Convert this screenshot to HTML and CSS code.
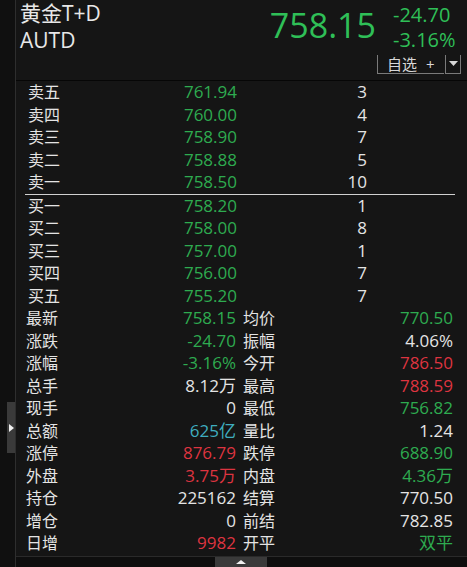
FILE: index.html
```html
<!DOCTYPE html>
<html lang="zh-CN">
<head>
<meta charset="utf-8">
<title>黄金T+D</title>
<link rel="stylesheet" href="styles.css">
</head>
<body>
<div class="app">
  <aside class="side">
    <div class="vthumb"><span class="rarrow"></span></div>
  </aside>
  <main class="main">
    <header class="head">
      <div class="title">
        <div>黄金T+D</div>
        <div>AUTD</div>
      </div>
      <div class="quote">
        <div class="qrow">
          <div class="last">758.15</div>
          <div class="chg">
            <div>-24.70</div>
            <div>-3.16%</div>
          </div>
        </div>
        <div class="tools">
          <span class="fav">自选<span class="plus">+</span></span>
          <span class="drop"><svg width="9" height="5" viewBox="0 0 9 5"><path d="M0 0H9L4.5 5Z" fill="#d8d8d8"/></svg></span>
        </div>
      </div>
    </header>

    <section class="book sell">
      <div class="row"><div class="c1"><span class="lbl">卖五</span><span class="num g">761.94</span></div><span class="num vol">3</span></div>
      <div class="row"><div class="c1"><span class="lbl">卖四</span><span class="num g">760.00</span></div><span class="num vol">4</span></div>
      <div class="row"><div class="c1"><span class="lbl">卖三</span><span class="num g">758.90</span></div><span class="num vol">7</span></div>
      <div class="row"><div class="c1"><span class="lbl">卖二</span><span class="num g">758.88</span></div><span class="num vol">5</span></div>
      <div class="row"><div class="c1"><span class="lbl">卖一</span><span class="num g">758.50</span></div><span class="num vol">10</span></div>
    </section>
    <section class="book buy">
      <div class="row"><div class="c1"><span class="lbl">买一</span><span class="num g">758.20</span></div><span class="num vol">1</span></div>
      <div class="row"><div class="c1"><span class="lbl">买二</span><span class="num g">758.00</span></div><span class="num vol">8</span></div>
      <div class="row"><div class="c1"><span class="lbl">买三</span><span class="num g">757.00</span></div><span class="num vol">1</span></div>
      <div class="row"><div class="c1"><span class="lbl">买四</span><span class="num g">756.00</span></div><span class="num vol">7</span></div>
      <div class="row"><div class="c1"><span class="lbl">买五</span><span class="num g">755.20</span></div><span class="num vol">7</span></div>
    </section>

    <section class="stats">
      <div class="cell"><span class="lbl">最新</span><span class="num g">758.15</span></div>
      <div class="cell"><span class="lbl">均价</span><span class="num g">770.50</span></div>
      <div class="cell"><span class="lbl">涨跌</span><span class="num g">-24.70</span></div>
      <div class="cell"><span class="lbl">振幅</span><span class="num w">4.06%</span></div>
      <div class="cell"><span class="lbl">涨幅</span><span class="num g">-3.16%</span></div>
      <div class="cell"><span class="lbl">今开</span><span class="num r">786.50</span></div>
      <div class="cell"><span class="lbl">总手</span><span class="num w">8.12万</span></div>
      <div class="cell"><span class="lbl">最高</span><span class="num r">788.59</span></div>
      <div class="cell"><span class="lbl">现手</span><span class="num w">0</span></div>
      <div class="cell"><span class="lbl">最低</span><span class="num g">756.82</span></div>
      <div class="cell"><span class="lbl">总额</span><span class="num c">625亿</span></div>
      <div class="cell"><span class="lbl">量比</span><span class="num w">1.24</span></div>
      <div class="cell"><span class="lbl">涨停</span><span class="num r">876.79</span></div>
      <div class="cell"><span class="lbl">跌停</span><span class="num g">688.90</span></div>
      <div class="cell"><span class="lbl">外盘</span><span class="num r">3.75万</span></div>
      <div class="cell"><span class="lbl">内盘</span><span class="num g">4.36万</span></div>
      <div class="cell"><span class="lbl">持仓</span><span class="num w">225162</span></div>
      <div class="cell"><span class="lbl">结算</span><span class="num w">770.50</span></div>
      <div class="cell"><span class="lbl">增仓</span><span class="num w">0</span></div>
      <div class="cell"><span class="lbl">前结</span><span class="num w">782.85</span></div>
      <div class="cell"><span class="lbl">日增</span><span class="num r">9982</span></div>
      <div class="cell"><span class="lbl">开平</span><span class="num g">双平</span></div>
    </section>

    <div class="hscroll"><div class="hthumb"><span class="uarrow"></span></div></div>
  </main>
</div>
</body>
</html>
```

FILE: styles.css
```css
* { box-sizing: border-box; }
html, body { margin: 0; padding: 0; }
body {
  width: 467px;
  height: 567px;
  overflow: hidden;
  background: #151515;
  color: #e4e4e4;
  font-family: "Open Sans", "Noto Sans CJK SC", sans-serif;
}
.app { display: flex; height: 567px; }

.side {
  width: 16px;
  flex: none;
  background: #101010;
  border-right: 1px solid #2e2e2e;
  padding-top: 402px;
}
.vthumb {
  position: relative;
  margin-left: 7px;
  width: 8px;
  height: 51px;
  background: #3a3a3a;
}
.rarrow {
  position: absolute;
  left: 2px;
  top: 22px;
  width: 0; height: 0;
  border-left: 5px solid #f0f0f0;
  border-top: 4px solid transparent;
  border-bottom: 4px solid transparent;
}

.main { flex: 1; display: flex; flex-direction: column; min-width: 0; }

.head {
  height: 81px;
  flex: none;
  border-bottom: 1px solid #060606;
  display: flex;
  justify-content: space-between;
}
.title {
  padding: 0 0 0 4px;
  font-size: 21px;
  line-height: 27px;
  color: #e8e8e8;
}
.quote {
  display: flex;
  flex-direction: column;
  align-items: flex-end;
  padding-right: 6px;
}
.qrow { display: flex; align-items: flex-start; padding-right: 5px; }
.last {
  margin-top: 3px;
  font-size: 34px;
  line-height: 44px;
  color: #2fbf57;
}
.chg {
  margin-left: 17px;
  margin-top: 2px;
  width: 63px;
  font-size: 20px;
  line-height: 25px;
  color: #2fbf57;
}
.tools { display: flex; margin-top: 3px; height: 19px; }
.fav {
  width: 67px;
  padding-left: 9px;
  border-left: 1px solid #7a7a7a;
  border-bottom: 1px solid #7a7a7a;
  font-size: 15px;
  line-height: 18px;
  color: #d8d8d8;
}
.plus { margin-left: 9px; }
.drop {
  width: 16px;
  margin-left: 1px;
  border-left: 1px solid #7a7a7a;
  border-right: 1px solid #7a7a7a;
  border-bottom: 1px solid #7a7a7a;
  display: flex;
  justify-content: center;
  padding-top: 6px;
}
.drop svg { display: block; }

.book { margin: 0 12px 0 9px; padding-left: 3px; }
.book.sell { border-bottom: 1px solid #d0d0d0; }
.row {
  display: grid;
  grid-template-columns: 209px 130px;
  height: 22.5px;
  line-height: 22.5px;
}
.c1 { display: flex; justify-content: space-between; }
.vol { text-align: right; }

.lbl { font-size: 16px; color: #e4e4e4; }
.num { font-size: 17px; }
.g { color: #2eab50; }
.r { color: #dd3440; }
.w { color: #e4e4e4; }
.c { color: #3fadbf; }

.stats {
  padding-left: 10px;
  display: grid;
  grid-template-columns: 210px 210px;
  column-gap: 7px;
}
.cell {
  display: flex;
  justify-content: space-between;
  height: 22.5px;
  line-height: 22.5px;
}

.hscroll {
  margin-top: auto;
  height: 11px;
  border-top: 1px solid #2a2a2a;
  background: #0e0e0e;
  padding-left: 199px;
}
.hthumb {
  width: 52px;
  height: 10px;
  background: #3a3a3a;
  display: flex;
  justify-content: center;
  padding-top: 3px;
}
.uarrow {
  width: 0; height: 0;
  border-bottom: 4px solid #f0f0f0;
  border-left: 5px solid transparent;
  border-right: 5px solid transparent;
}
```
